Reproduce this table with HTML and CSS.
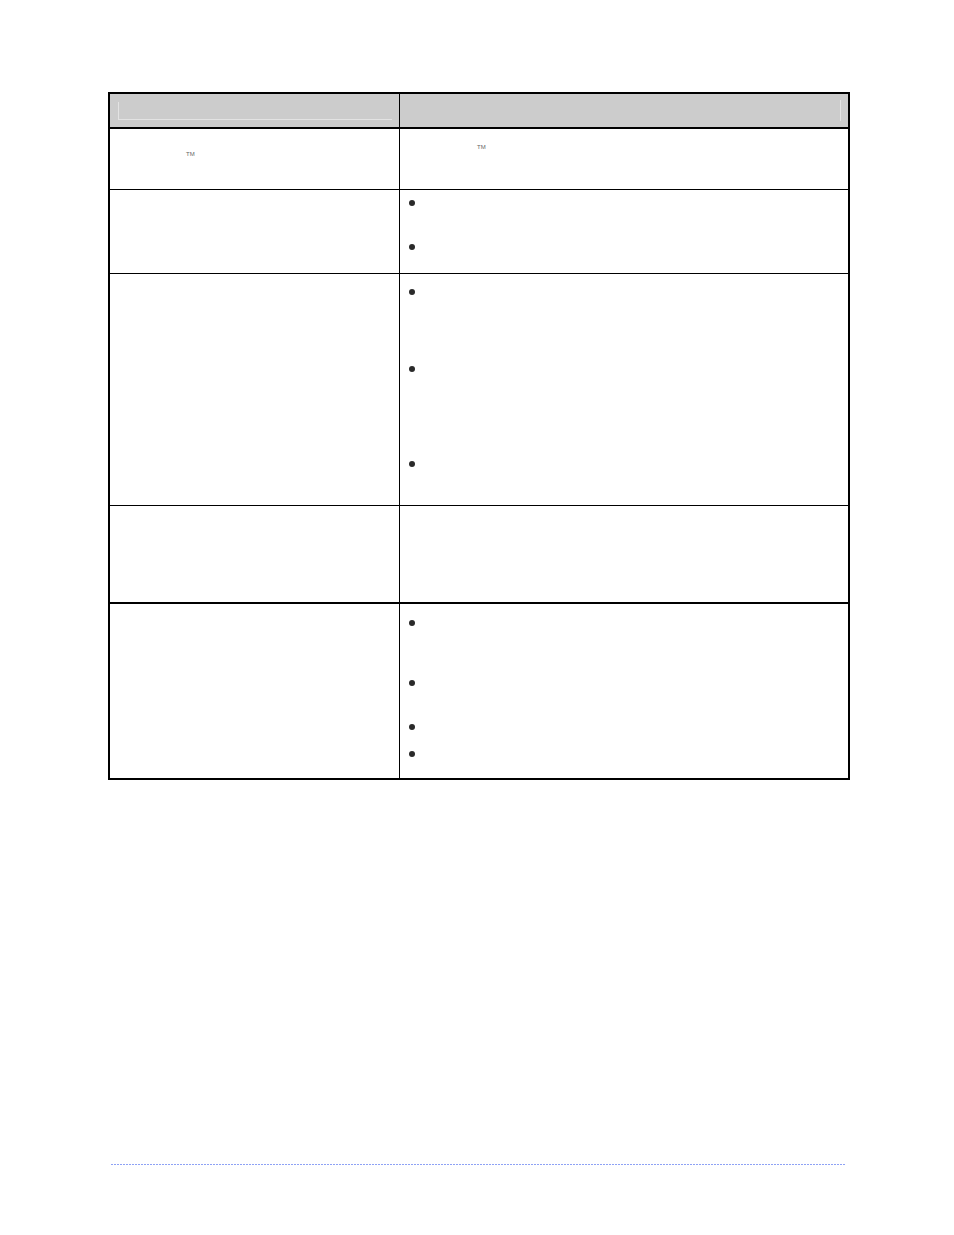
FILE: index.html
```html
<!DOCTYPE html>
<html lang="en">
<head>
<meta charset="utf-8">
<title>Table</title>
<link rel="stylesheet" href="styles.css">
</head>
<body>
<div class="page">
  <div class="table">
    <div class="row head">
      <div class="cell left"><div class="ghost-left"></div></div>
      <div class="cell right"><div class="ghost-right"></div></div>
    </div>
    <div class="row r1">
      <div class="cell left"><div class="line tm-left"><span class="tm">TM</span></div></div>
      <div class="cell right"><div class="line tm-right"><span class="tm">TM</span></div></div>
    </div>
    <div class="row r2">
      <div class="cell left"></div>
      <div class="cell right">
        <ul class="bullets">
          <li class="l2"></li>
          <li class="l1"></li>
        </ul>
      </div>
    </div>
    <div class="row r3">
      <div class="cell left"></div>
      <div class="cell right">
        <ul class="bullets">
          <li class="l4"></li>
          <li class="l5"></li>
          <li class="l1"></li>
        </ul>
      </div>
    </div>
    <div class="row r4">
      <div class="cell left"></div>
      <div class="cell right"></div>
    </div>
    <div class="row r5">
      <div class="cell left"></div>
      <div class="cell right">
        <ul class="bullets">
          <li class="l3"></li>
          <li class="l2"></li>
          <li class="l1"></li>
          <li class="l1"></li>
        </ul>
      </div>
    </div>
  </div>
  <div class="footer-rule"></div>
</div>
</body>
</html>
```

FILE: styles.css
```css
* { box-sizing: border-box; }

html, body {
  margin: 0;
  padding: 0;
  background: #ffffff;
  font-family: "Liberation Serif", "Times New Roman", serif;
  color: #000;
}

.page {
  padding: 92px 0 0 108px;
  width: 954px;
  height: 1235px;
}

.table {
  width: 742px;
  border: 2px solid #000;
}

.row {
  display: grid;
  grid-template-columns: 290px 1fr;
  border-bottom: 1px solid #000;
}

.row.head {
  height: 35px;
  border-bottom-width: 2px;
  background: #cccccc;
}

.row.r1 { height: 61px; }
.row.r2 { height: 84px; }
.row.r3 { height: 232px; }
.row.r4 { height: 98px; border-bottom-width: 2px; }
.row.r5 { height: 174px; border-bottom: 0; }

.cell.left {
  border-right: 1px solid #000;
}

.cell {
  position: relative;
}

.head .cell.left {
  padding: 8px 8px 0 8px;
}

.ghost-left {
  width: 274px;
  height: 18px;
  border-left: 1px solid #e3e3e3;
  border-bottom: 1px solid #e3e3e3;
}

.head .cell.right {
  padding: 6px 7px 0 0;
  display: flex;
  justify-content: flex-end;
}

.ghost-right {
  width: 1px;
  height: 21px;
  background: #e3e3e3;
}

.line {
  height: 10px;
  line-height: 10px;
}

.tm {
  font-family: "Liberation Sans", Arial, sans-serif;
  font-size: 6px;
  color: #666;
  vertical-align: top;
}

.tm-left {
  padding: 20px 0 0 76px;
}

.tm-right {
  padding: 13px 0 0 77px;
}

.bullets {
  list-style: none;
  margin: 0;
  padding: 0 0 0 9px;
}

.r2 .bullets { padding-top: 5px; }
.r3 .bullets { padding-top: 10px; }
.r5 .bullets { padding-top: 11px; }

.bullets li {
  position: relative;
  margin-bottom: 10.5px;
}

.bullets li::before {
  content: "";
  position: absolute;
  left: 0;
  top: 5.25px;
  width: 6px;
  height: 6px;
  border-radius: 50%;
  background: #2a2a2a;
}

.l1 { height: 16.5px; }
.l2 { height: 33px; }
.l3 { height: 49.5px; }
.l4 { height: 66.5px; }
.l5 { height: 84.5px; }

.footer-rule {
  margin: 384px 0 0 3px;
  width: 734px;
  height: 1px;
  background: repeating-linear-gradient(to right, #8ea2f5 0 2px, transparent 2px 3px);
}
```
